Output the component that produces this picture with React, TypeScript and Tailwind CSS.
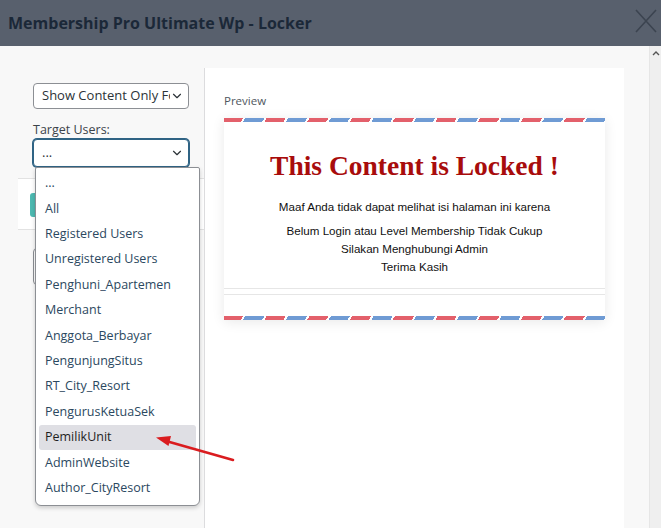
import { ChevronDown } from "lucide-react";

const TARGETS = [
  "...",
  "All",
  "Registered Users",
  "Unregistered Users",
  "Penghuni_Apartemen",
  "Merchant",
  "Anggota_Berbayar",
  "PengunjungSitus",
  "RT_City_Resort",
  "PengurusKetuaSek",
  "PemilikUnit",
  "AdminWebsite",
  "Author_CityResort",
];

const SELECTED = "PemilikUnit";

function Airmail() {
  return (
    <div className="h-[4px] w-full bg-[repeating-linear-gradient(120deg,#e3606b_0px,#e3606b_16.5px,#ffffff_16.5px,#ffffff_18.5px,#6f9bd4_18.5px,#6f9bd4_35px,#ffffff_35px,#ffffff_37px)]" />
  );
}

export default function App() {
  return (
    <div className="relative w-[661px] h-[528px] overflow-hidden flex flex-col font-['Open_Sans',sans-serif]">
      {/* header */}
      <div className="h-[46px] shrink-0 bg-[#58606d] flex items-center justify-between pl-[8px] pr-[3px]">
        <div className="text-[16px] font-bold text-[#1b2838] leading-none">
          Membership Pro Ultimate Wp - Locker
        </div>
        <svg width="24" height="24" viewBox="0 0 24 24" className="mt-[-4px]">
          <path d="M2 1 L22 23 M22 1 L2 23" stroke="#3c4450" strokeWidth="1.6" fill="none" />
        </svg>
      </div>

      {/* body */}
      <div className="flex flex-1 bg-[#f8f8f8]">
        {/* settings column */}
        <div className="w-[204px] shrink-0 pt-[37px] pl-[18px]">
          <div className="ml-[15px] w-[156px] h-[26px] bg-white border border-[#8c8f94] rounded-[4px] flex items-center justify-between pl-[8px] pr-[4px] overflow-hidden">
            <span className="text-[13px] text-[#2c3338] whitespace-nowrap overflow-hidden w-[128px]">
              Show Content Only For
            </span>
            <ChevronDown className="w-[14px] h-[14px] text-[#2c3338] shrink-0" strokeWidth={2} />
          </div>

          <div className="ml-[15px] mt-[13px] text-[12.5px] leading-[16px] text-[#3c434a]">Target Users:</div>

          <div className="relative ml-[15px] mt-[1px] w-[156px]">
            <div className="h-[28px] bg-white border border-[#2f6384] shadow-[0_0_0_1px_#2f6384] rounded-[4px] flex items-center justify-between pl-[8px] pr-[4px]">
              <span className="text-[13px] text-[#2c3338]">...</span>
              <ChevronDown className="w-[14px] h-[14px] text-[#2c3338]" strokeWidth={2} />
            </div>

            {/* open option list */}
            <div className="absolute z-10 top-full left-[2px] w-[165px] bg-white border border-[#8c8f94] rounded-b-[6px] rounded-t-[2px] shadow-[0_2px_4px_rgba(0,0,0,0.18)] px-[3px] pt-[3px] pb-[4px]">
              {TARGETS.map((t) => (
                <div
                  key={t}
                  className={
                    t === SELECTED
                      ? "h-[25.4px] flex items-center px-[6px] rounded-[3px] bg-[#dfdfe4] text-[12.5px] text-[#1e1e1e]"
                      : "h-[25.4px] flex items-center px-[6px] text-[12.5px] text-[#2b4860]"
                  }
                >
                  {t}
                </div>
              ))}
            </div>
          </div>

          <div className="mt-[11px] w-[186px] h-[52px] bg-white border-y border-[#e2e2e2] pl-[12px] pt-[14px]">
            <div className="w-[90px] h-[24px] rounded-[3px] bg-[#4db9b1]" />
          </div>

          <div className="ml-[15px] mt-[18px] w-[156px] h-[37px] border border-[#8c8f94] rounded-[4px] bg-white" />
        </div>

        {/* preview panel */}
        <div className="mt-[22px] w-[420px] shrink-0 bg-white border-l border-[#dcdcde] pl-[19px] pt-[26px]">
          <div className="text-[11.5px] leading-[14px] text-[#50575e]">Preview</div>
          <div className="mt-[10px] w-[381px] bg-white shadow-[0_2px_12px_rgba(0,0,0,0.09)]">
            <Airmail />
            <div className="pt-[28px] pb-[12px] border-b border-[#e6e6e6] text-center">
              <div className="font-['Liberation_Serif',serif] font-bold text-[27.5px] leading-[32px] text-[#a80c0c]">
                This Content is Locked !
              </div>
              <div className="mt-[16px] font-['Liberation_Sans',sans-serif] text-[11.6px] leading-[18px] text-[#111]">
                Maaf Anda tidak dapat melihat isi halaman ini karena
              </div>
              <div className="mt-[6px] font-['Liberation_Sans',sans-serif] text-[11.6px] leading-[18px] text-[#111]">
                <div>Belum Login atau Level Membership Tidak Cukup</div>
                <div>Silakan Menghubungi Admin</div>
                <div>Terima Kasih</div>
              </div>
            </div>
            <div className="mt-[5px] h-[22px] border-t border-[#e6e6e6]" />
            <Airmail />
          </div>
        </div>

        <div className="flex-1 bg-[#f8f8f8]" />

        {/* scrollbar */}
        <div className="w-[12px] shrink-0 bg-[#efefef] border-l border-[#e6e6e6] flex justify-center pt-[4px]">
          <svg width="8" height="6" viewBox="0 0 8 6">
            <path d="M1 5 L4 2 L7 5" stroke="#555" strokeWidth="1.4" fill="none" />
          </svg>
        </div>
      </div>

      {/* red annotation arrow */}
      <svg className="absolute z-20 left-0 top-0 pointer-events-none" width="661" height="528">
        <line x1="233" y1="460" x2="166" y2="441" stroke="#da1c1f" strokeWidth="2.6" strokeLinecap="round" />
        <polygon points="156,437.5 171,436 168.5,446" fill="#da1c1f" />
      </svg>
    </div>
  );
}
